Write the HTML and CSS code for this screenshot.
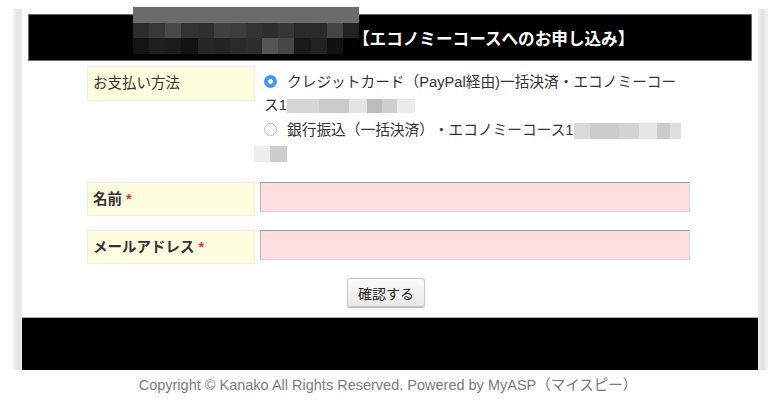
FILE: index.html
```html
<!DOCTYPE html>
<html lang="ja">
<head>
<meta charset="utf-8">
<title>エコノミーコースへのお申し込み</title>
<link rel="stylesheet" href="styles.css">
</head>
<body>
<div class="page">
  <div class="sheet">
    <header class="hd">
      <div class="logo">
        <div class="logo-band"></div>
        <div class="logo-row">
          <i style="background:#2c2c2c"></i><i style="background:#383838"></i><i style="background:#4a4848"></i><i style="background:#333"></i><i style="background:#2f2f2f"></i><i style="background:#404040"></i><i style="background:#3d3d3d"></i><i style="background:#333"></i><i style="background:#2e2e2e"></i><i style="background:#363636"></i><i style="background:#2a2a2a"></i><i style="background:#2b2b2b"></i><i style="background:#444"></i><i style="background:#222"></i>
        </div>
        <div class="logo-row">
          <i style="background:#141414"></i><i style="background:#1f1f1f"></i><i style="background:#1c1c1c"></i><i style="background:#121212"></i><i style="background:#262626"></i><i style="background:#242424"></i><i style="background:#2a2a2a"></i><i style="background:#2d2d2d"></i><i style="background:#555"></i><i style="background:#474747"></i><i style="background:#1a1a1a"></i><i style="background:#222"></i><i style="background:#111"></i><i style="background:#000"></i>
        </div>
      </div>
      <h1 class="hd-title">【エコノミーコースへのお申し込み】</h1>
    </header>

    <div class="form">
      <div class="row row-pay">
        <div class="lbl">お支払い方法</div>
        <div class="fld">
          <div class="opt"><span class="radio on"></span>クレジットカード（PayPal経由)一括決済・エコノミーコー<br>ス1<span class="mz mz1"></span></div>
          <div class="opt"><span class="radio"></span>銀行振込（一括決済）・エコノミーコース1<span class="mz mz2"></span><br><span class="mz mz3"></span></div>
        </div>
      </div>
      <div class="row">
        <div class="lbl lbl-b">名前 <span class="req">*</span></div>
        <div class="inp"></div>
      </div>
      <div class="row row-mail">
        <div class="lbl lbl-b">メールアドレス <span class="req">*</span></div>
        <div class="inp"></div>
      </div>
    </div>

    <div class="actions"><button class="btn" type="button">確認する</button></div>
    <div class="ft"></div>
  </div>
</div>
<p class="copy">Copyright © Kanako All Rights Reserved. Powered by MyASP（マイスピー）</p>
</body>
</html>
```

FILE: styles.css
```css
html, body {
  margin: 0;
  padding: 0;
  background: #fff;
}
body {
  font-family: "Liberation Sans", "Noto Sans CJK JP", sans-serif;
  color: #333;
  text-spacing-trim: space-all;
}
.page {
  margin: 9px 12px 0 13px;
  padding: 0 10px 0 9px;
  background:
    linear-gradient(90deg, #f3f3f3 0, #e2e2e2 5px, #ececec 9px, transparent 9px) left / 9px 100% no-repeat,
    linear-gradient(90deg, #ececec 0, #e2e2e2 5px, #f3f3f3 10px) right / 10px 100% no-repeat;
}
.sheet {
  background: #fff;
  padding-top: 5px;
}
.hd {
  margin: 0 6px;
  height: 47px;
  box-sizing: border-box;
  background: #000;
  border: 1px solid #6a6a6a;
  display: flex;
  align-items: flex-start;
}
.logo {
  margin: -8px 0 0 104px;
  width: 226px;
  flex: none;
}
.logo-band {
  height: 16px;
  background: #6b6b6b;
}
.logo-row {
  display: grid;
  grid-template-columns: repeat(14, 1fr);
  height: 15px;
}
.logo-row + .logo-row {
  height: 16px;
}
.hd-title {
  align-self: center;
  margin: 0 0 0 -6px;
  font-family: "Noto Sans CJK JP", sans-serif;
  font-size: 16.6px;
  font-weight: bold;
  color: #fff;
  line-height: 20px;
  white-space: nowrap;
}
.form {
  margin: 5px 0 0 65px;
}
.row {
  display: flex;
  column-gap: 5px;
  margin-top: 17px;
}
.row-pay {
  margin-top: 0;
}
.row-mail {
  margin-top: 14px;
}
.lbl {
  width: 168px;
  height: 34px;
  box-sizing: border-box;
  background: #ffffe0;
  border: 1px solid #ececec;
  padding: 0 5px;
  font-size: 14.5px;
  line-height: 32px;
  flex: none;
}
.row-pay .lbl {
  height: 35px;
}
.lbl-b {
  font-weight: bold;
}
.req {
  color: #e53333;
}
.fld {
  width: 430px;
  box-sizing: border-box;
  padding: 5px 0 0 4px;
  font-size: 14.7px;
  line-height: 23px;
}
.opt + .opt {
  margin-top: 2px;
}
.radio {
  display: inline-block;
  width: 13px;
  height: 13px;
  box-sizing: border-box;
  border-radius: 50%;
  border: 1px solid #b9b9b9;
  background: #fff;
  margin-right: 10px;
  vertical-align: -1px;
}
.radio.on {
  border: none;
  background: radial-gradient(circle, #fff 0 2.2px, #3b99fc 2.8px);
}
.mz {
  display: inline-block;
  vertical-align: middle;
}
.mz1 {
  width: 128px;
  height: 14px;
  background: linear-gradient(90deg, #d6d6d6 0 32px, #cbcbcb 32px 62px, #e4e4e4 62px 80px, #bcbcbc 80px 95px, #cfcfcf 95px 110px, #ebebeb 110px);
}
.mz2 {
  width: 107px;
  height: 16px;
  background: linear-gradient(90deg, #d9d9d9 0 16px, #cdcdcd 16px 45px, #d3d3d3 45px 65px, #e6e6e6 65px 83px, #cbcbcb 83px 96px, #dedede 96px);
}
.mz3 {
  width: 33px;
  height: 16px;
  margin-left: -10px;
  background: linear-gradient(90deg, #eeeeee 0 16px, #cdcdcd 16px);
}
.inp {
  width: 430px;
  height: 30px;
  box-sizing: border-box;
  background: #ffdde0;
  border: 1px solid #d4d4d4;
  border-top-color: #9a9a9a;
  border-left-color: #b4b4b4;
}
.actions {
  display: flex;
  justify-content: center;
  margin-top: 14px;
  padding-right: 8px;
}
.btn {
  width: 78px;
  height: 29px;
  box-sizing: border-box;
  font-family: "Noto Sans CJK JP", sans-serif;
  font-size: 14px;
  color: #222;
  background: linear-gradient(#fbfbfb, #e9e9e9);
  border: 1px solid #c6c6c6;
  border-radius: 3px;
  box-shadow: 0 1px 1px rgba(0, 0, 0, 0.3);
  padding: 0;
}
.ft {
  margin-top: 10px;
  height: 53px;
  box-sizing: border-box;
  background: #000;
  border-top: 1px solid #a8a8a8;
}
.copy {
  margin: 5px 0 0;
  text-align: center;
  font-size: 14.5px;
  line-height: 20px;
  color: #7a7a7a;
  padding-right: 4px;
}
```
